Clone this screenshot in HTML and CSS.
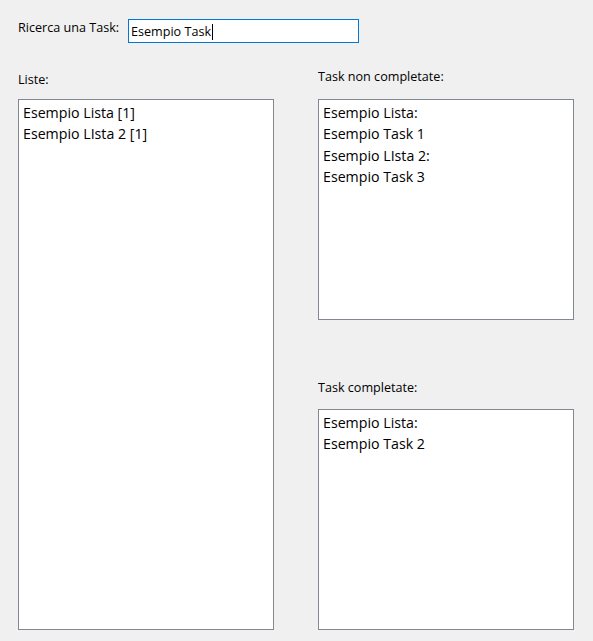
FILE: index.html
```html
<!DOCTYPE html>
<html lang="it">
<head>
<meta charset="utf-8">
<title>Task</title>
<link rel="stylesheet" href="styles.css">
</head>
<body>
<div class="app">
  <div class="search-row">
    <label class="search-label">Ricerca una Task:</label>
    <div class="search-input">Esempio Task<span class="caret"></span></div>
  </div>
  <div class="panels">
    <section class="col col-left">
      <div class="label label-liste">Liste:</div>
      <div class="listbox listbox-tall">
        <div class="item">Esempio Lista [1]</div>
        <div class="item">Esempio LIsta 2 [1]</div>
      </div>
    </section>
    <section class="col col-right">
      <div class="label label-open">Task non completate:</div>
      <div class="listbox listbox-short">
        <div class="item">Esempio Lista:</div>
        <div class="item">Esempio Task 1</div>
        <div class="item">Esempio LIsta 2:</div>
        <div class="item">Esempio Task 3</div>
      </div>
      <div class="label label-done">Task completate:</div>
      <div class="listbox listbox-short">
        <div class="item">Esempio Lista:</div>
        <div class="item">Esempio Task 2</div>
      </div>
    </section>
  </div>
</div>
</body>
</html>
```

FILE: styles.css
```css
html, body {
  margin: 0;
  padding: 0;
  background: #f0f0f0;
}
body {
  font-family: "Open Sans", "Noto Sans", sans-serif;
  color: #000;
  width: 593px;
  height: 641px;
  overflow: hidden;
}
.app {
  padding: 19px 0 0 18px;
}
.search-row {
  display: flex;
  align-items: flex-start;
}
.search-label {
  font-size: 12.6px;
  line-height: 15px;
  padding-top: 1px;
  width: 110px;
}
.search-input {
  box-sizing: border-box;
  width: 231px;
  height: 24px;
  border: 1px solid #0078d7;
  background: #fff;
  font-size: 12.6px;
  line-height: 15px;
  padding: 4px 2px 0 2px;
  display: flex;
  align-items: flex-start;
}
.caret {
  display: inline-block;
  width: 1px;
  height: 16px;
  background: #000;
  margin-left: 1px;
}
.panels {
  display: grid;
  grid-template-columns: 256px 256px;
  column-gap: 44px;
  margin-top: 26px;
}
.col {
  display: flex;
  flex-direction: column;
}
.label {
  font-size: 12.6px;
  line-height: 15px;
}
.label-liste {
  margin-top: 3px;
  margin-bottom: 12px;
}
.label-open {
  margin-bottom: 15px;
}
.label-done {
  margin-top: 60px;
  margin-bottom: 14px;
}
.listbox {
  box-sizing: border-box;
  background: #fff;
  border: 1px solid #828790;
  padding: 2px 4px 0 4px;
}
.listbox-tall {
  height: 531px;
}
.listbox-short {
  height: 221px;
}
.item {
  font-size: 14.2px;
  line-height: 21.4px;
  white-space: nowrap;
}
```
